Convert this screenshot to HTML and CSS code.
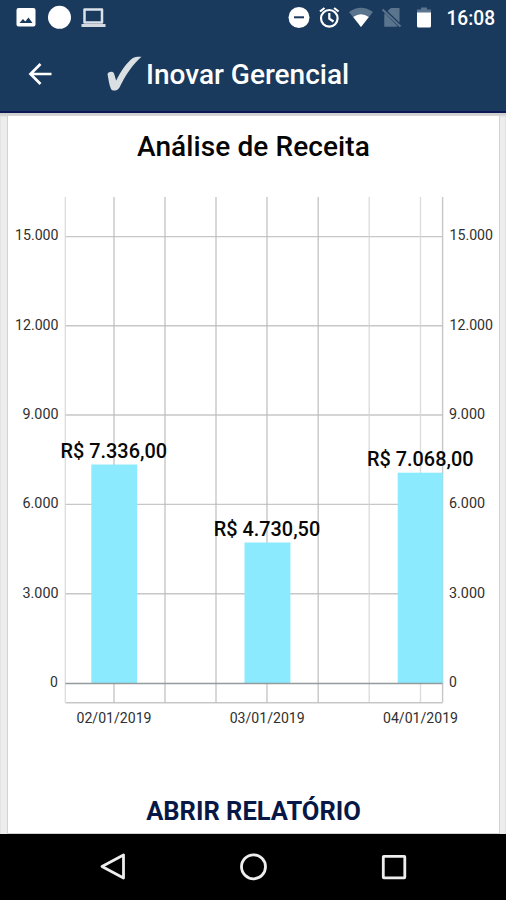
FILE: index.html
```html
<!DOCTYPE html>
<html lang="pt-BR">
<head>
<meta charset="utf-8">
<title>Inovar Gerencial</title>
<link rel="stylesheet" href="styles.css">
</head>
<body>
<div class="screen">
  <header class="top">
    <svg class="status" viewBox="0 0 506 36">
      <path class="white" fill-rule="evenodd" d="M18.500 8H33.500Q35.500 8 35.500 10V24.500Q35.500 26.500 33.500 26.500H18.500Q16.500 26.500 16.500 24.500V10Q16.500 8 18.500 8ZM19.500 23H32.500L28.500 17.500L25.300 21.500L23 19Z"/>
      <circle class="white" cx="59.500" cy="17.300" r="11.500"/>
      <path class="laptop" d="M84.500 9.500H102V22.500H84.500Z"/>
      <path class="laptop-base" d="M81.500 24H105.500V27H81.500Z"/>
      <circle class="white" cx="299" cy="17.500" r="10.500"/>
      <path class="dash" d="M294 17.300H304"/>
      <g class="line"><circle cx="329.300" cy="18.300" r="8.300"/><path d="M329.300 13V18.700L333.500 21.500M320 11.500L324.500 8M338.600 11.500L334.100 8"/></g>
      <path class="faded" d="M349 12Q361 3.500 373 12L361 27Z"/>
      <path class="white" d="M353.200 17Q361 11.500 368.800 17L361 27Z"/>
      <path class="faded" d="M391 8H399.500V22.500L387.500 11ZM384.500 14.500L396 26.500H384.500Z"/>
      <path class="faded" d="M384.500 13L398 26.500H384.500Z"/>
      <path class="faded-line" d="M382.500 9.500L400.500 26.500"/>
      <path class="faded" d="M421 7.500H427V9.500H431V13H417V9.500H421Z"/>
      <path class="white" d="M417 12.500H431V26Q431 27.500 429.500 27.500H418.500Q417 27.500 417 26Z"/>
      <text class="clock" x="446.500" y="24.700" textLength="48.500" lengthAdjust="spacingAndGlyphs">16:08</text>
    </svg>
    <div class="appbar">
      <svg class="back" viewBox="0 0 24 22"><path d="M23.500 11H2.500M12.500 1L2.500 11L12.500 21"/></svg>
      <svg class="check" viewBox="0 0 36 36"><path d="M1.500 18C2.500 15.500 6.500 15 7.800 17C9 19.500 9.200 22 10.200 24.500C15 15 21 6.500 26.500 2.300C29 .7 32 .7 35.500 .8C27 8 19 20 13.500 31.500C12 35 6.500 35.600 5 33C3.200 29 2.500 23 1.500 18Z"/></svg>
      <h1 class="brand">Inovar Gerencial</h1>
    </div>
  </header>
  <main class="page">
    <section class="card">
      <h2 class="title">Análise de Receita</h2>
      <svg class="chart" viewBox="8 177 491 563">
        <g class="grid">
          <path d="M65.500 236.600H442.500M65.500 325.700H442.500M65.500 415H442.500M65.500 504.400H442.500M65.500 593.700H442.500"/>
          <path d="M114 197V702.500M165 197V702.500M216 197V702.500M267 197V702.500M318.200 197V702.500"/>
          <path class="soft" d="M369.200 197V702.500M420.500 197V702.500M65.300 197V702.500"/>
          <path d="M442.600 197V702.500M65.500 702.700H442.500"/>
        </g>
        <g class="bars">
          <rect x="91.300" y="464.500" width="45.800" height="219"/>
          <rect x="244.500" y="542.500" width="45.900" height="141"/>
          <rect x="397.700" y="472.700" width="45" height="210.800"/>
        </g>
        <path class="zero" d="M65.500 683.500H442.500"/>
        <g class="axis">
          <text x="15" y="240.200" textLength="43.500" lengthAdjust="spacingAndGlyphs">15.000</text>
          <text x="15" y="329.500" textLength="43.500" lengthAdjust="spacingAndGlyphs">12.000</text>
          <text x="22.500" y="418.900" textLength="36" lengthAdjust="spacingAndGlyphs">9.000</text>
          <text x="22.500" y="508.400" textLength="36" lengthAdjust="spacingAndGlyphs">6.000</text>
          <text x="22.500" y="597.800" textLength="36" lengthAdjust="spacingAndGlyphs">3.000</text>
          <text x="50" y="687.300">0</text>
          <text x="449.500" y="240.200" textLength="43.500" lengthAdjust="spacingAndGlyphs">15.000</text>
          <text x="449.500" y="329.500" textLength="43.500" lengthAdjust="spacingAndGlyphs">12.000</text>
          <text x="449" y="418.900" textLength="36" lengthAdjust="spacingAndGlyphs">9.000</text>
          <text x="449" y="508.400" textLength="36" lengthAdjust="spacingAndGlyphs">6.000</text>
          <text x="449" y="597.800" textLength="36" lengthAdjust="spacingAndGlyphs">3.000</text>
          <text x="449" y="687.300">0</text>
          <text x="76.500" y="722.600" textLength="75" lengthAdjust="spacingAndGlyphs">02/01/2019</text>
          <text x="229.700" y="722.600" textLength="75" lengthAdjust="spacingAndGlyphs">03/01/2019</text>
          <text x="383" y="722.600" textLength="75" lengthAdjust="spacingAndGlyphs">04/01/2019</text>
        </g>
        <g class="values">
          <text x="60.500" y="457.700" textLength="106.500" lengthAdjust="spacingAndGlyphs">R$ 7.336,00</text>
          <text x="213.700" y="535.700" textLength="106.500" lengthAdjust="spacingAndGlyphs">R$ 4.730,50</text>
          <text x="367" y="465.800" textLength="106.500" lengthAdjust="spacingAndGlyphs">R$ 7.068,00</text>
        </g>
      </svg>
      <button class="open">ABRIR RELATÓRIO</button>
    </section>
  </main>
  <nav class="nav">
    <svg viewBox="0 0 28 28"><path d="M24.500 2V25L3 13.500Z"/></svg>
    <svg viewBox="0 0 28 28"><circle cx="14.500" cy="13.800" r="12"/></svg>
    <svg viewBox="0 0 28 28"><rect x="3.300" y="3.300" width="21.500" height="21.500" rx=".5"/></svg>
  </nav>
</div>
</body>
</html>
```
FILE: styles.css
```css
* { box-sizing: border-box; }
body { margin: 0; font-family: Roboto, "Liberation Sans", sans-serif; }
.screen { display: flex; flex-direction: column; width: 506px; height: 900px; overflow: hidden; }
svg { display: block; flex: none; }
.top { flex: none; height: 113px; background: #1a3a5d; border-bottom: 2px solid #0d1954; }
.status { width: 506px; height: 36px; }
.white { fill: #fff; }
.laptop { fill: none; stroke: #dce2ea; stroke-width: 2.500; stroke-linejoin: round; }
.laptop-base { fill: #d5dae1; }
.dash { stroke: #1a3a5d; stroke-width: 2; }
.line { fill: none; stroke: #fff; stroke-width: 2.200; }
.faded { fill: #5b748e; }
.faded-line { stroke: #5b748e; stroke-width: 2; }
.clock { fill: #fff; font-size: 19.500px; font-weight: 500; }
.appbar { display: flex; align-items: center; height: 75px; padding-left: 28px; }
.back { width: 24px; height: 22px; margin-top: 1px; fill: none; stroke: #fff; stroke-width: 2.700; }
.check { width: 36px; height: 36px; margin-left: 54px; fill: #d9dfe2; }
.brand { margin: 3px 0 0 4px; color: #fff; font-size: 28px; font-weight: 500; line-height: 32px; white-space: nowrap; letter-spacing: 0; }
.page { flex: 1; min-height: 0; padding: 3px 6px 0 7px; background: #ededed; box-shadow: inset 0 3px 2px #cfcfcf; }
.card { display: flex; flex-direction: column; height: 100%; background: #fff; border: solid #d2d2d2; border-width: 0 1px 1px; }
.title { height: 61px; margin: 0; padding-top: 15px; color: #050505; font-size: 28px; font-weight: 500; line-height: 32px; text-align: center; white-space: nowrap; letter-spacing: .1px; }
.chart { width: 491px; height: 563px; }
.grid { fill: none; stroke: #b9b9b9; stroke-opacity: .8; stroke-width: 1.400; }
.grid .soft { stroke: #d4d4d4; }
.bars { fill: #8ceaff; }
.zero { stroke: #929b9d; stroke-width: 1.300; }
.axis { fill: #303030; font-size: 14px; }
.values { fill: #080808; font-size: 19.500px; font-weight: 500; }
.open { padding: 0; margin-top: 55px; border: 0; background: none; color: #071846; font: 700 25.500px/32px Roboto, sans-serif; text-align: center; white-space: nowrap; }
.nav { display: flex; flex: none; justify-content: center; gap: 112.500px; height: 66px; padding-top: 19px; background: #000; }
.nav svg { width: 28px; height: 28px; fill: none; stroke: #eee; stroke-width: 2.800; stroke-linejoin: round; }
```
